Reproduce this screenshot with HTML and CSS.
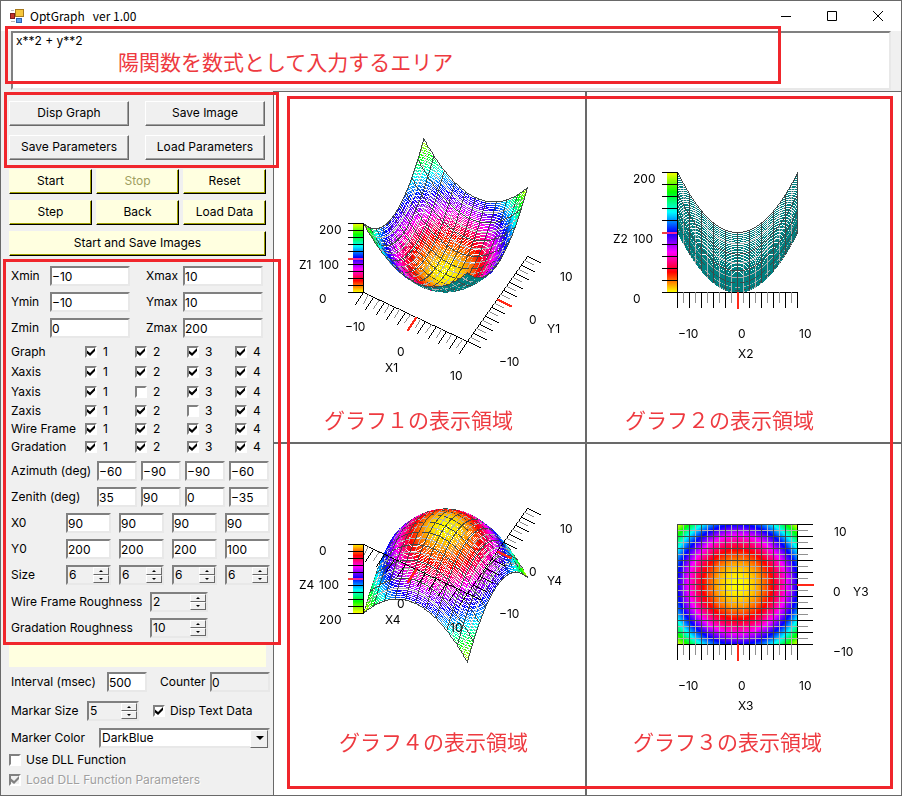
FILE: index.html
```html
<!DOCTYPE html>
<html lang="ja">
  <head>
    <meta charset="UTF-8" />
    <meta name="viewport" content="width=device-width, initial-scale=1.0" />
    <title>OptGraph</title>
    <link rel="stylesheet" href="styles.css">
  </head>
  <body>
    <header class="titlebar">
      <svg class="app-icon" width="14" height="14" viewBox="0 0 14 14">
        <rect x="5.5" y=".5" width="8" height="7" fill="#f6c73c" stroke="#a87a1c" />
        <rect x=".5" y="4.5" width="4" height="5" fill="#c4342c" stroke="#7c1c1c" />
        <rect x="6.5" y="9.5" width="5" height="4" fill="#5c9cea" stroke="#2c62b4" />
        <path d="M1 1.5h3M1 12.5h4" stroke="#b8b8b8" />
      </svg>
      <h1>OptGraph &nbsp; ver 1.00</h1>
      <button class="caption-button" aria-label="Minimize">
        <svg width="12" height="12" viewBox="0 0 12 12"><path d="M1 6.5h10" /></svg>
      </button>
      <button class="caption-button" aria-label="Maximize">
        <svg width="12" height="12" viewBox="0 0 12 12"><path d="M1.5 1.5h9v9h-9z" /></svg>
      </button>
      <button class="caption-button" aria-label="Close">
        <svg width="12" height="12" viewBox="0 0 12 12"><path d="M1 1l10 10M11 1L1 11" /></svg>
      </button>
    </header>

    <section class="formula">
      <textarea class="sunken" aria-label="Formula" spellcheck="false">x**2 + y**2</textarea>
      <p class="note">陽関数を数式として入力するエリア</p>
    </section>

    <main>
      <form class="sidebar">
        <div class="actions">
          <button type="button">Disp Graph</button>
          <button type="button">Save Image</button>
          <button type="button">Save Parameters</button>
          <button type="button">Load Parameters</button>
        </div>

        <div class="player">
          <button type="button">Start</button>
          <button type="button" disabled>Stop</button>
          <button type="button">Reset</button>
          <button type="button">Step</button>
          <button type="button">Back</button>
          <button type="button">Load Data</button>
          <button type="button" class="wide">Start and Save Images</button>
        </div>

        <div class="ranges">
          <label for="xmin">Xmin</label><input class="sunken" id="xmin" value="−10">
          <label for="xmax">Xmax</label><input class="sunken" id="xmax" value="10">
          <label for="ymin">Ymin</label><input class="sunken" id="ymin" value="−10">
          <label for="ymax">Ymax</label><input class="sunken" id="ymax" value="10">
          <label for="zmin">Zmin</label><input class="sunken" id="zmin" value="0">
          <label for="zmax">Zmax</label><input class="sunken" id="zmax" value="200">
        </div>

        <div class="checks">
          <span>Graph</span>
          <label><input type="checkbox" checked>1</label>
          <label><input type="checkbox" checked>2</label>
          <label><input type="checkbox" checked>3</label>
          <label><input type="checkbox" checked>4</label>
          <span>Xaxis</span>
          <label><input type="checkbox" checked>1</label>
          <label><input type="checkbox" checked>2</label>
          <label><input type="checkbox" checked>3</label>
          <label><input type="checkbox" checked>4</label>
          <span>Yaxis</span>
          <label><input type="checkbox" checked>1</label>
          <label><input type="checkbox">2</label>
          <label><input type="checkbox" checked>3</label>
          <label><input type="checkbox" checked>4</label>
          <span>Zaxis</span>
          <label><input type="checkbox" checked>1</label>
          <label><input type="checkbox" checked>2</label>
          <label><input type="checkbox">3</label>
          <label><input type="checkbox" checked>4</label>
          <span>Wire Frame</span>
          <label><input type="checkbox" checked>1</label>
          <label><input type="checkbox" checked>2</label>
          <label><input type="checkbox" checked>3</label>
          <label><input type="checkbox" checked>4</label>
          <span>Gradation</span>
          <label><input type="checkbox" checked>1</label>
          <label><input type="checkbox" checked>2</label>
          <label><input type="checkbox" checked>3</label>
          <label><input type="checkbox" checked>4</label>
        </div>

        <div class="angles">
          <label for="azimuth1">Azimuth (deg)</label>
          <input class="sunken" id="azimuth1" value="−60">
          <input class="sunken" aria-label="Azimuth 2" value="−90">
          <input class="sunken" aria-label="Azimuth 3" value="−90">
          <input class="sunken" aria-label="Azimuth 4" value="−60">
          <label for="zenith1">Zenith (deg)</label>
          <input class="sunken" id="zenith1" value="35">
          <input class="sunken" aria-label="Zenith 2" value="90">
          <input class="sunken" aria-label="Zenith 3" value="0">
          <input class="sunken" aria-label="Zenith 4" value="−35">
        </div>

        <div class="offsets">
          <label for="x01">X0</label>
          <input class="sunken" id="x01" value="90">
          <input class="sunken" aria-label="X0 2" value="90">
          <input class="sunken" aria-label="X0 3" value="90">
          <input class="sunken" aria-label="X0 4" value="90">
          <label for="y01">Y0</label>
          <input class="sunken" id="y01" value="200">
          <input class="sunken" aria-label="Y0 2" value="200">
          <input class="sunken" aria-label="Y0 3" value="200">
          <input class="sunken" aria-label="Y0 4" value="100">
          <label for="size1">Size</label>
          <span class="spinner sunken"><input type="number" id="size1" value="6"><button type="button" class="up" aria-label="Up"></button><button type="button" class="down" aria-label="Down"></button></span>
          <span class="spinner sunken"><input type="number" aria-label="Size 2" value="6"><button type="button" class="up" aria-label="Up"></button><button type="button" class="down" aria-label="Down"></button></span>
          <span class="spinner sunken"><input type="number" aria-label="Size 3" value="6"><button type="button" class="up" aria-label="Up"></button><button type="button" class="down" aria-label="Down"></button></span>
          <span class="spinner sunken"><input type="number" aria-label="Size 4" value="6"><button type="button" class="up" aria-label="Up"></button><button type="button" class="down" aria-label="Down"></button></span>
        </div>

        <div class="roughness">
          <label for="wireRoughness">Wire Frame Roughness</label>
          <span class="spinner sunken"><input type="number" id="wireRoughness" value="2"><button type="button" class="up" aria-label="Up"></button><button type="button" class="down" aria-label="Down"></button></span>
          <label for="gradRoughness">Gradation Roughness</label>
          <span class="spinner sunken"><input type="number" id="gradRoughness" value="10"><button type="button" class="up" aria-label="Up"></button><button type="button" class="down" aria-label="Down"></button></span>
        </div>

        <div class="progress"></div>

        <div class="interval">
          <label for="interval">Interval (msec)</label>
          <input class="sunken" id="interval" value="500">
          <label for="counter">Counter</label>
          <input class="sunken" id="counter" value="0" readonly>
        </div>

        <div class="marker-size">
          <label for="markerSize">Markar Size</label>
          <span class="spinner sunken"><input type="number" id="markerSize" value="5"><button type="button" class="up" aria-label="Up"></button><button type="button" class="down" aria-label="Down"></button></span>
          <label class="check"><input type="checkbox" checked>Disp Text Data</label>
        </div>

        <div class="marker-color">
          <label for="markerColor">Marker Color</label>
          <span class="combo sunken">
            <select id="markerColor"><option>DarkBlue</option></select>
          </span>
        </div>

        <div class="dll">
          <label class="check"><input type="checkbox">Use DLL Function</label>
          <label class="check disabled"><input type="checkbox" checked disabled>Load DLL Function Parameters</label>
        </div>
      </form>

      <div class="graphs">
        <div class="graph">
          <canvas id="graph1" width="311" height="350"></canvas>
          <svg width="311" height="350">
            <text x="45" y="142">200</text>
            <text x="25" y="177">Z1</text>
            <text x="45" y="177">100</text>
            <text x="45" y="211">0</text>
            <text x="71" y="239">−10</text>
            <text x="123" y="264">0</text>
            <text x="111" y="280">X1</text>
            <text x="176" y="288">10</text>
            <text x="225" y="274">−10</text>
            <text x="255" y="232">0</text>
            <text x="273" y="241">Y1</text>
            <text x="286" y="189">10</text>
            <text class="region" x="50" y="336">グラフ１の表示領域</text>
          </svg>
        </div>
        <div class="graph">
          <canvas id="graph2" width="311" height="350"></canvas>
          <svg width="311" height="350">
            <text x="46" y="91">200</text>
            <text x="26" y="151">Z2</text>
            <text x="46" y="151">100</text>
            <text x="46" y="211">0</text>
            <text x="91" y="246">−10</text>
            <text x="151" y="246">0</text>
            <text x="212" y="246">10</text>
            <text x="151" y="266">X2</text>
            <text class="region" x="38" y="336">グラフ２の表示領域</text>
          </svg>
        </div>
        <div class="graph">
          <canvas id="graph4" width="311" height="350"></canvas>
          <svg width="311" height="350">
            <text x="45" y="111">0</text>
            <text x="25" y="145">Z4</text>
            <text x="45" y="145">100</text>
            <text x="45" y="180">200</text>
            <text x="123" y="164">0</text>
            <text x="111" y="180">X4</text>
            <text x="176" y="188">10</text>
            <text x="225" y="174">−10</text>
            <text x="255" y="132">0</text>
            <text x="273" y="141">Y4</text>
            <text x="286" y="89">10</text>
            <text class="region" x="65" y="306">グラフ４の表示領域</text>
          </svg>
        </div>
        <div class="graph">
          <canvas id="graph3" width="311" height="350"></canvas>
          <svg width="311" height="350">
            <text x="91" y="246">−10</text>
            <text x="151" y="246">0</text>
            <text x="212" y="246">10</text>
            <text x="151" y="266">X3</text>
            <text x="247" y="92">10</text>
            <text x="246" y="152">0</text>
            <text x="266" y="152">Y3</text>
            <text x="246" y="212">−10</text>
            <text class="region" x="46" y="306">グラフ３の表示領域</text>
          </svg>
        </div>
      </div>
    </main>

    <!-- Red frames over the window -->
    <div class="frame frame-formula"></div>
    <div class="frame frame-actions"></div>
    <div class="frame frame-params"></div>
    <div class="frame frame-graphs"></div>

    <script src="graph.js"></script>
  </body>
</html>
```
FILE: styles.css
```css
* {
  margin: 0;
  padding: 0;
  box-sizing: border-box;
}

body {
  position: relative;
  display: flex;
  flex-direction: column;
  min-height: 100vh;
  border: 1px solid #696969;
  background-color: #f0f0f0;
  color: #000;
  font-family: Inter, "Noto Sans CJK JP", sans-serif;
  font-size: 12px;
  line-height: 16px;
}

button,
input,
select,
textarea {
  font: inherit;
  color: inherit;
  border-radius: 0;
  outline: none;
}

/* Title bar */
.titlebar {
  display: flex;
  align-items: center;
  height: 30px;
  padding-left: 9px;
  background-color: #fff;
}

.titlebar h1 {
  flex: 1;
  margin-left: 6px;
  font-family: "Noto Sans CJK JP", sans-serif;
  font-size: 12px;
  font-weight: 400;
}

.caption-button {
  width: 46px;
  height: 30px;
  border: none;
  background: none;
}

.caption-button svg {
  display: block;
  margin: auto;
  fill: none;
  stroke: #000;
}

/* Formula box */
.formula {
  position: relative;
  height: 60px;
  padding: 0 10px;
}

.formula textarea {
  display: block;
  width: 100%;
  height: 59px;
  padding: 0 3px;
  resize: none;
}

.note {
  position: absolute;
  left: 117px;
  top: 14px;
  font-family: "Noto Sans CJK JP", sans-serif;
  font-size: 21px;
  line-height: 32px;
  color: #ee3a40;
}

.sunken {
  border: 2px solid;
  border-color: #808080 #e8e8e8 #e8e8e8 #808080;
  background-color: #fff;
}

main {
  flex: 1;
  display: grid;
  grid-template-columns: 272px 1fr;
}

/* Sidebar */
.sidebar {
  padding: 10px 2px 0 8px;
}

.sidebar label,
.sidebar .checks span {
  padding-left: 2px;
  white-space: nowrap;
}

.sidebar input.sunken {
  width: 100%;
  height: 20px;
  padding: 0;
}

.sidebar input[readonly] {
  background-color: #f0f0f0;
}

.actions,
.player,
.ranges,
.checks,
.angles,
.offsets,
.roughness,
.interval,
.marker-size,
.marker-color {
  display: grid;
  align-items: center;
}

.actions {
  grid-template-columns: 120px 120px;
  gap: 9px 16px;
}

.actions button,
.player button {
  height: 25px;
  padding-bottom: 1px;
  border: 1px solid;
  border-color: #fff #696969 #696969 #fff;
  box-shadow: inset -1px -1px #a0a0a0;
  background-color: #f0f0f0;
}

.player {
  grid-template-columns: repeat(3, 83px);
  gap: 6px 4px;
  margin-top: 9px;
}

.player button {
  border-color: #ffffe0 #000 #000 #ffffe0;
  box-shadow: inset -1px -1px #a0a000;
  background-color: #ffffe0;
}

.player button:disabled {
  color: #a0a060;
}

.player .wide {
  grid-column: 1 / -1;
}

.ranges {
  grid-template-columns: 41px 80px 53px 80px;
  row-gap: 6px;
  margin-top: 10px;
}

.ranges label:nth-of-type(even) {
  padding-left: 16px;
}

.checks {
  grid-template-columns: 74px 50px 52px 48px 36px;
  grid-template-rows: 20px 20px 19px 19px 18px 18px;
  margin-top: 4px;
}

.checks label {
  display: flex;
  align-items: center;
  gap: 6px;
}

.angles {
  grid-template-columns: 84px repeat(4, 40px);
  gap: 6px 4px;
  margin-top: 5px;
}

.offsets {
  grid-template-columns: 49px repeat(4, 45px);
  gap: 6px 8px;
  margin-top: 6px;
}

.roughness {
  grid-template-columns: 141px 58px;
  row-gap: 6px;
  margin-top: 7px;
}

.progress {
  width: 257px;
  height: 22px;
  margin-top: 7px;
  background-color: #ffffe0;
}

.interval {
  grid-template-columns: 98px 40px 63px 60px;
  margin-top: 5px;
}

.interval label:nth-of-type(2) {
  padding-left: 13px;
}

.marker-size {
  grid-template-columns: 78px 52px 1fr;
  margin-top: 9px;
}

.marker-size .check {
  padding-left: 14px;
}

.marker-color {
  grid-template-columns: 90px 171px;
  margin-top: 7px;
}

.dll {
  margin-top: 2px;
}

.check {
  display: flex;
  align-items: center;
  gap: 5px;
  height: 20px;
}

.dll .check {
  padding-left: 0;
}

.disabled {
  color: #a0a0a0;
  text-shadow: 1px 1px #fff;
}

/* Check boxes */
input[type="checkbox"] {
  appearance: none;
  width: 12px;
  height: 12px;
  border: 2px solid;
  border-color: #808080 #fff #fff #808080;
  background-color: #fff;
}

input[type="checkbox"]:checked::before {
  content: "";
  display: block;
  width: 8px;
  height: 8px;
  background-color: #000;
  clip-path: polygon(0 30%, 38% 62%, 100% 0, 100% 36%, 38% 100%, 0 68%);
}

input[type="checkbox"]:disabled {
  background-color: #f0f0f0;
}

input[type="checkbox"]:disabled::before {
  background-color: #808080;
}

/* Spinners */
.spinner {
  display: grid;
  grid-template-columns: 1fr 16px;
  grid-template-rows: 8px 8px;
  height: 20px;
  background-color: #f0f0f0;
}

.spinner input {
  grid-row: 1 / 3;
  width: 100%;
  height: 16px;
  padding-left: 1px;
  border: none;
  background: none;
  appearance: textfield;
}

.spinner input::-webkit-inner-spin-button {
  appearance: none;
}

.spinner button {
  display: flex;
  justify-content: center;
  align-items: center;
  height: 8px;
  border: 1px solid;
  border-color: #fff #696969 #696969 #fff;
  background-color: #f0f0f0;
}

.spinner button::before {
  content: "";
  border: 2px solid transparent;
}

.spinner .up::before {
  border-top: none;
  border-bottom-color: #000;
}

.spinner .down::before {
  border-bottom: none;
  border-top-color: #000;
}

/* Combo box */
.combo {
  position: relative;
  display: flex;
  height: 20px;
}

.combo select {
  flex: 1;
  height: 16px;
  padding-left: 1px;
  border: none;
  background: none;
  appearance: none;
}

.combo::before {
  content: "";
  position: absolute;
  right: 0;
  top: 0;
  width: 16px;
  height: 16px;
  border: 1px solid;
  border-color: #fff #696969 #696969 #fff;
  background-color: #f0f0f0;
}

.combo::after {
  content: "";
  position: absolute;
  right: 4px;
  top: 6px;
  border: 4px solid transparent;
  border-top-color: #000;
  border-bottom: none;
}

/* Graphs */
.graphs {
  display: grid;
  grid-template-columns: 311fr 313fr;
  grid-template-rows: 350fr 351fr;
  gap: 2px;
  padding: 1px 0 0 1px;
  background-color: #696969;
}

.graph {
  display: grid;
  justify-content: start;
  align-content: start;
  min-width: 0;
  overflow: hidden;
  background-color: #fff;
}

.graph canvas,
.graph svg {
  grid-area: 1 / 1;
}

.region {
  font-family: "Noto Sans CJK JP", sans-serif;
  font-size: 21px;
  fill: #ee3a40;
}

/* Red frames */
.frame {
  position: absolute;
  border: 3px solid #f0262c;
  pointer-events: none;
}

.frame-formula {
  left: 4px;
  top: 25px;
  right: 120px;
  height: 58px;
}

.frame-actions {
  left: 3px;
  top: 91px;
  width: 275px;
  height: 76px;
}

.frame-params {
  left: 2px;
  top: 258px;
  width: 278px;
  height: 386px;
}

.frame-graphs {
  left: 286px;
  right: 8px;
  top: 95px;
  bottom: 6px;
}
```
FILE: graph.js
```js
const SIZE = 6; // pixels per unit
const LENGTH = 20 * SIZE;

const graphs = [
  { id: "graph1", x0: 89, y0: 200, azimuth: -60, zenith: 35, xTick: [-8, 12], yTick: [13, 6], yaxis: true, zaxis: true },
  { id: "graph2", x0: 90, y0: 200, azimuth: -90, zenith: 90, xTick: [0, 15], yaxis: false, zaxis: true },
  { id: "graph3", x0: 90, y0: 200, azimuth: -90, zenith: 0, xTick: [0, 15], yTick: [15, 0], yaxis: true, zaxis: false },
  { id: "graph4", x0: 89, y0: 100, azimuth: -60, zenith: -35, xTick: [-8, 12], yTick: [13, 6], yaxis: true, zaxis: true },
];

function colorOf(z) {
  return `hsl(${(420 - 1.8 * z) % 360}, 100%, 50%)`;
}

// One pixel wide line without smoothing
function line(ctx, from, to, color, width = 1) {
  const x = Math.round(from[0]);
  const y = Math.round(from[1]);
  const dx = Math.round(to[0]) - x;
  const dy = Math.round(to[1]) - y;
  const steps = Math.max(Math.abs(dx), Math.abs(dy), 1);
  ctx.fillStyle = color;
  for (let i = 0; i <= steps; i++) {
    ctx.fillRect(Math.round(x + (dx * i) / steps), Math.round(y + (dy * i) / steps), width, width);
  }
}

function draw(graph) {
  const ctx = document.getElementById(graph.id).getContext("2d");
  const turn = ((graph.azimuth + 90) * Math.PI) / 180;
  const tilt = (graph.zenith * Math.PI) / 180;

  const depth = (i, j) => j * Math.cos(turn) - i * Math.sin(turn);
  const project = (i, j, h) => [
    graph.x0 + i * Math.cos(turn) + j * Math.sin(turn),
    graph.y0 - depth(i, j) * Math.cos(tilt) - h * Math.sin(tilt),
  ];
  const valueAt = (i, j) => (i / SIZE - 10) ** 2 + (j / SIZE - 10) ** 2;
  const surface = (i, j) => project(i, j, (valueAt(i, j) * LENGTH) / 200);

  // Surface, from the far side to the near side
  const points = [];
  for (let i = 0; i <= LENGTH; i++) {
    for (let j = 0; j <= LENGTH; j++) {
      points.push([i, j, depth(i, j)]);
    }
  }
  points.sort((a, b) => b[2] - a[2]);

  const middle = depth(LENGTH / 2, LENGTH / 2);
  const isMajor = (n) => n % (2 * SIZE) === 0;
  for (const [i, j, d] of points) {
    const p = surface(i, j);
    const front = Math.cos(tilt) + (Math.sin(tilt) * (d - middle)) / 30 > 0.001;
    const isWire = i % SIZE === 0 || j % SIZE === 0;
    ctx.fillStyle = isWire ? "#b0b0b0" : front ? colorOf(valueAt(i, j)) : "#008080";
    ctx.fillRect(Math.round(p[0]), Math.round(p[1]), 1, 1);
    if (isMajor(j) && i > 0) {
      line(ctx, p, surface(i - 1, j), "#404848");
    }
    if (isMajor(i) && j < LENGTH) {
      line(ctx, p, surface(i, j + 1), "#404848");
    }
  }

  // X and Y axes
  const ticks = (at, vector) => {
    line(ctx, at(0), at(LENGTH), "#000");
    for (let n = 0; n <= 20; n++) {
      const p = at(n * SIZE);
      const scale = n % 2 === 0 ? 1 : 0.68;
      const color = n === 10 ? "#ff2818" : n % 2 === 0 ? "#000" : "#909090";
      line(ctx, p, [p[0] + vector[0] * scale, p[1] + vector[1] * scale], color, n === 10 ? 2 : 1);
    }
  };
  ticks((n) => project(n, 0, 0), graph.xTick);
  if (graph.yaxis) {
    ticks((n) => project(LENGTH, n, 0), graph.yTick);
  }

  // Z axis with the color scale
  if (graph.zaxis) {
    const bottom = project(0, 0, 0)[1];
    const top = project(0, 0, LENGTH)[1];
    const scale = ctx.createLinearGradient(0, bottom, 0, top);
    for (let n = 0; n <= 60; n++) {
      scale.addColorStop(n / 60, colorOf((n * 200) / 60));
    }
    ctx.fillStyle = scale;
    ctx.fillRect(graph.x0 - 10, Math.round(Math.min(top, bottom)), 10, Math.round(Math.abs(top - bottom)));
    line(ctx, [graph.x0, bottom], [graph.x0, top], "#000");
    for (let n = 0; n <= 10; n++) {
      const y = bottom + ((top - bottom) * n) / 10;
      if (n === 5) {
        line(ctx, [graph.x0 - 15, y], [graph.x0 - 11, y], "#f04040", 2);
        line(ctx, [graph.x0 - 10, y], [graph.x0 - 2, y], "#f020a0", 2);
      } else {
        line(ctx, [graph.x0 - 15, y], [graph.x0, y], "#000");
      }
    }
  }
}

graphs.forEach(draw);
```
